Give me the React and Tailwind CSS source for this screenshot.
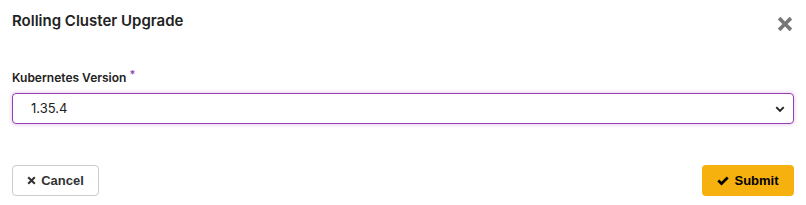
function XIcon({ className }) {
  return (
    <svg viewBox="0 0 16 16" className={className} fill="currentColor">
      <path d="M3.4 0.8 8 5.4l4.6-4.6 2.6 2.6L10.6 8l4.6 4.6-2.6 2.6L8 10.6l-4.6 4.6-2.6-2.6L5.4 8 0.8 3.4z" />
    </svg>
  );
}

function CheckIcon({ className }) {
  return (
    <svg viewBox="0 0 16 16" className={className} fill="currentColor">
      <path d="M0.5 8.5 3 6l3 3L13 2l2.5 2.5L6 14z" />
    </svg>
  );
}

export default function App() {
  return (
    <div
      className="w-[806px] h-[205px] bg-white text-[#222] px-3"
      style={{ fontFamily: "Inter, 'Liberation Sans', sans-serif" }}
    >
      <div className="flex items-start justify-between pt-[11px]">
        <h2 className="text-[15px] font-semibold leading-[20px] text-[#222]">
          Rolling Cluster Upgrade
        </h2>
        <button className="mt-[5px] mr-[1px] text-[#777]">
          <XIcon className="w-[16px] h-[16px]" />
        </button>
      </div>

      <div className="mt-[39px]">
        <label className="block text-[12px] font-semibold leading-[14px] text-[#222]">
          Kubernetes Version
          <span className="text-[#9b3fb5] ml-[3px] relative -top-[4px] text-[11px]">*</span>
        </label>
        <div className="mt-[8px] flex items-center h-[31px] rounded-[4px] border border-[#9b3fb5] bg-white pr-[8px] shadow-[0_0_4px_rgba(155,63,181,0.35)]">
          <span className="ml-[18px] flex-1 text-[13px] text-[#222]">1.35.4</span>
          <svg
            viewBox="0 0 16 16"
            className="w-[10px] h-[10px] text-[#222]"
            fill="none"
            stroke="currentColor"
            strokeWidth="3"
          >
            <path d="M2 5l6 6 6-6" />
          </svg>
        </div>
      </div>

      <div
        className="flex justify-between mt-[41px]"
        style={{ fontFamily: "'Liberation Sans', Arial, sans-serif" }}
      >
        <button className="flex items-center gap-[5px] h-[31px] w-[87px] justify-center rounded-[4px] border border-[#ccc] bg-white text-[13px] font-bold text-[#333]">
          <XIcon className="w-[9px] h-[9px]" />
          Cancel
        </button>
        <button className="flex items-center gap-[5px] h-[31px] w-[92px] justify-center rounded-[4px] bg-[#f6b10f] text-[13px] font-bold text-[#000]">
          <CheckIcon className="w-[12px] h-[12px]" />
          Submit
        </button>
      </div>
    </div>
  );
}
